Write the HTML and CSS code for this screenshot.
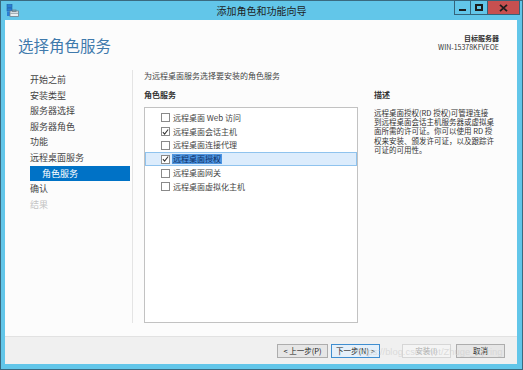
FILE: index.html
```html
<!DOCTYPE html>
<html lang="zh-CN">
<head>
<meta charset="utf-8">
<title>添加角色和功能向导</title>
<link rel="stylesheet" href="styles.css">
</head>
<body>
<div class="window">
  <div class="titlebar">
    <div class="tb-left">
      <svg class="appicon" width="13" height="13" viewBox="0 0 13 13">
        <rect x="1" y="0.5" width="5" height="3" fill="#2a7fd4" stroke="#1b5fa8" stroke-width="0.6"/>
        <rect x="1" y="4" width="5" height="3" fill="#2a7fd4" stroke="#1b5fa8" stroke-width="0.6"/>
        <rect x="1" y="7.5" width="3" height="4.5" fill="#2a7fd4"/>
        <rect x="4" y="7" width="8.5" height="5.5" fill="#e8eef2" stroke="#6d7f8a" stroke-width="0.8"/>
        <rect x="6.5" y="6" width="3.5" height="1.5" fill="none" stroke="#6d7f8a" stroke-width="0.8"/>
        <line x1="4.5" y1="9.3" x2="12" y2="9.3" stroke="#6d7f8a" stroke-width="0.7"/>
      </svg>
    </div>
    <div class="title">添加角色和功能向导</div>
    <div class="tb-right">
      <span class="cb cb-min"><i></i></span>
      <span class="cb cb-max"><i></i></span>
      <span class="cb cb-close">
        <svg width="9" height="8" viewBox="0 0 9 8"><path d="M1 0.8 L8 7.2 M8 0.8 L1 7.2" stroke="#1d1d1d" stroke-width="1.8"/></svg>
      </span>
    </div>
  </div>
  <div class="client">
    <div class="header">
      <h1 class="page-title">选择角色服务</h1>
      <div class="target">
        <div class="target-label">目标服务器</div>
        <div class="target-name">WIN-15378KFVEOE</div>
      </div>
    </div>
    <div class="body">
      <nav class="nav">
        <div class="nav-item">开始之前</div>
        <div class="nav-item">安装类型</div>
        <div class="nav-item">服务器选择</div>
        <div class="nav-item">服务器角色</div>
        <div class="nav-item">功能</div>
        <div class="nav-item">远程桌面服务</div>
        <div class="nav-item nav-sub nav-active">角色服务</div>
        <div class="nav-item">确认</div>
        <div class="nav-item nav-disabled">结果</div>
      </nav>
      <div class="main">
        <p class="intro">为远程桌面服务选择要安装的角色服务</p>
        <div class="cols">
          <div class="list-col">
            <div class="label">角色服务</div>
            <div class="listbox">
              <div class="row"><span class="chk"></span><span class="txt">远程桌面 Web 访问</span></div>
              <div class="row"><span class="chk on"><svg width="8" height="8" viewBox="0 0 8 8"><path d="M1 4.2 L3 6.4 L7 1.2" fill="none" stroke="#333" stroke-width="1.2"/></svg></span><span class="txt">远程桌面会话主机</span></div>
              <div class="row"><span class="chk"></span><span class="txt">远程桌面连接代理</span></div>
              <div class="row row-sel"><span class="chk on"><svg width="8" height="8" viewBox="0 0 8 8"><path d="M1 4.2 L3 6.4 L7 1.2" fill="none" stroke="#333" stroke-width="1.2"/></svg></span><span class="txt txt-sel">远程桌面授权</span></div>
              <div class="row"><span class="chk"></span><span class="txt">远程桌面网关</span></div>
              <div class="row"><span class="chk"></span><span class="txt">远程桌面虚拟化主机</span></div>
            </div>
          </div>
          <div class="desc">
            <div class="label">描述</div>
            <p class="desc-text">远程桌面授权(RD 授权)可管理连接<br>到远程桌面会话主机服务器或虚拟桌<br>面所需的许可证。你可以使用 RD 授<br>权来安装、颁发许可证，以及跟踪许<br>可证的可用性。</p>
          </div>
        </div>
      </div>
    </div>
    <div class="footer">
      <button class="btn btn-prev">&lt; 上一步(P)</button>
      <button class="btn btn-next">下一步(N) &gt;</button>
      <button class="btn btn-install" disabled>安装(I)</button>
      <button class="btn btn-cancel">取消</button>
    </div>
  </div>
  <div class="watermark">https://blog.csdn.net/Zhuge_Spring</div>
</div>
</body>
</html>
```

FILE: styles.css
```css
* { box-sizing: border-box; }
html, body { margin: 0; padding: 0; background: #ffffff; }
body {
  font-family: "Noto Sans CJK SC", "Noto Sans", sans-serif;
  color: #3a3a3a;
}
.window {
  position: relative;
  width: 523px;
  height: 370px;
  background: #62c6e9;
  border: 1px solid #3a6a80;
  display: flex;
  flex-direction: column;
}
.titlebar {
  height: 19px;
  display: grid;
  grid-template-columns: 1fr auto 1fr;
  align-items: start;
  flex: none;
}
.tb-left { padding: 3px 0 0 5px; }
.appicon { display: block; }
.title {
  font-size: 10px;
  line-height: 19px;
  color: #1e1e1e;
}
.tb-right {
  display: flex;
  justify-content: flex-end;
  padding-right: 2px;
  margin-top: -1px;
}
.cb {
  height: 15px;
  border: 1px solid #34637a;
  border-left: none;
  display: flex;
  align-items: center;
  justify-content: center;
  background: #62c6e9;
}
.cb-min { width: 17px; border-left: 1px solid #34637a; }
.cb-max { width: 17px; }
.cb-close { width: 32px; background: #c75050; }
.cb-min i {
  display: block;
  width: 7px;
  height: 2px;
  background: #1d1d1d;
  margin-top: 5px;
}
.cb-max i {
  display: block;
  width: 8px;
  height: 7px;
  border: 2px solid #1d1d1d;
}
.client {
  flex: 1;
  margin: 0 5px 5px 4px;
  background: #fcfcfc;
  display: flex;
  flex-direction: column;
}
.header {
  height: 46px;
  flex: none;
  display: flex;
  justify-content: space-between;
  align-items: flex-start;
  padding: 0 18px 0 13px;
}
.page-title {
  margin: 14px 0 0 0;
  font-weight: normal;
  font-size: 15.5px;
  line-height: 22px;
  color: #3f7aac;
}
.target {
  margin-top: 14px;
  text-align: right;
  font-size: 7px;
  line-height: 9px;
  color: #333;
}
.target-label { font-weight: bold; }
.body {
  flex: 1;
  display: flex;
}
.nav {
  width: 128px;
  flex: none;
  margin: 4px 0 13px 0;
  padding-top: 2px;
  border-right: 1px solid #e4e4e4;
}
.nav-item {
  margin-left: 25px;
  width: 100px;
  height: 15.6px;
  line-height: 15.6px;
  font-size: 9px;
  color: #444;
  white-space: nowrap;
}
.nav-sub { padding-left: 12px; }
.nav-active { background: #0072c6; color: #fff; }
.nav-disabled { color: #c4c4c4; }
.main {
  flex: 1;
  padding: 4px 19px 13px 11px;
  display: flex;
  flex-direction: column;
}
.intro {
  margin: 0;
  font-size: 8px;
  line-height: 12px;
  color: #444;
}
.cols {
  flex: 1;
  display: flex;
  margin-top: 7px;
  gap: 16px;
}
.list-col {
  width: 214px;
  flex: none;
  display: flex;
  flex-direction: column;
}
.label {
  font-size: 8px;
  line-height: 12px;
  font-weight: bold;
  color: #333;
}
.listbox {
  flex: 1;
  margin-top: 6px;
  border: 1px solid #c2c2c2;
  background: #ffffff;
  padding-top: 3px;
}
.row {
  height: 13.8px;
  display: flex;
  align-items: center;
  padding-left: 15px;
  border: 1px solid transparent;
}
.row-sel {
  background: #dcecfc;
  border-color: #8fc3ee;
}
.chk {
  width: 9px;
  height: 9px;
  border: 1px solid #8a8a8a;
  background: #fff;
  display: flex;
  align-items: center;
  justify-content: center;
  flex: none;
}
.chk svg { display: block; }
.txt {
  margin-left: 3px;
  font-size: 8px;
  line-height: 10px;
  color: #444;
  white-space: nowrap;
}
.txt-sel {
  background: #4e95e0;
  color: #0d2e66;
  padding: 0 1px;
  margin-left: 2px;
}
.desc {
  flex: 1;
}
.desc-text {
  margin: 7px 0 0 0;
  font-size: 7.5px;
  line-height: 9.2px;
  color: #333;
  white-space: nowrap;
}
.footer {
  height: 28px;
  flex: none;
  background: #f0f0f0;
  border-top: 1px solid #e2e2e2;
  display: flex;
  justify-content: flex-end;
  align-items: flex-start;
  padding: 7px 12px 0 0;
}
.btn {
  height: 14px;
  width: 49px;
  padding: 0;
  margin: 0;
  font-family: "Noto Sans CJK SC", "Noto Sans", sans-serif;
  font-size: 7.5px;
  line-height: 12px;
  color: #222;
  background: #e6e6e6;
  border: 1px solid #adadad;
  border-radius: 0;
}
.btn-prev { width: 51px; }
.btn-next { margin-left: 3px; border-color: #3f8ed0; background: #e5f0fa; }
.btn-install { margin-left: 22px; color: #a8a8a8; background: #f4f4f4; border-color: #d6d6d6; }
.btn-cancel { margin-left: 5px; }
.watermark {
  position: absolute;
  left: 356px;
  top: 345px;
  font-family: "Liberation Sans", sans-serif;
  font-size: 9.4px;
  line-height: 12px;
  color: rgba(210, 210, 210, 0.75);
  white-space: nowrap;
  pointer-events: none;
}
```
